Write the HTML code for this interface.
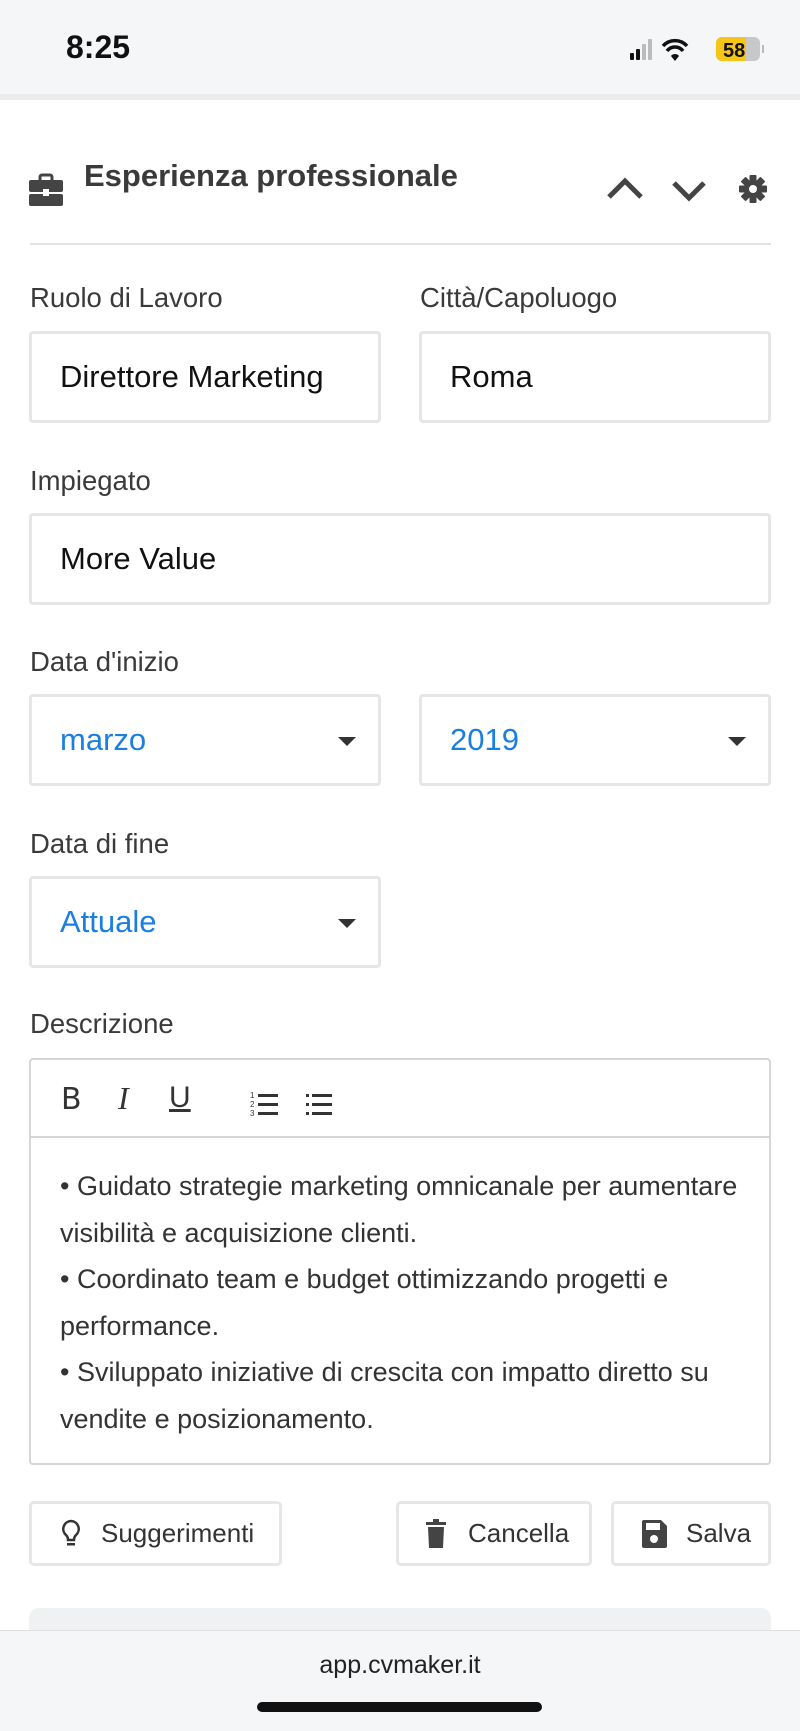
<!DOCTYPE html>
<html><head><meta charset="utf-8"><style>
*{box-sizing:border-box;margin:0;padding:0}
body{width:800px;height:1731px;overflow:hidden;background:#fff;font-family:"Liberation Sans",Arial,sans-serif;color:#333;position:relative}
.abs{position:absolute}
.status{left:0;top:0;width:800px;height:100px;background:#f5f6f8;border-bottom:6px solid #ebecee}
.label{font-size:27.5px;color:#3a3a3a}
.inp{border:3px solid #e6e6e6;border-radius:4px;background:#fff;font-size:31px;color:#111;padding-left:28px;display:flex;align-items:center}
.sel{color:#1a7fe0}
.caret{position:absolute;right:22px;top:50%;margin-top:-3px;border-left:9px solid transparent;border-right:9px solid transparent;border-top:9px solid #333}
.btn{border:3px solid #e6e6e6;border-radius:5px;display:flex;align-items:center;font-size:26px;color:#333}
.txt{font-size:27px;color:#333;line-height:46.6px}
</style></head><body>
<div class="abs status"></div>
<div class="abs" style="left:66px;top:29px;font-size:32px;font-weight:bold;color:#111">8:25</div>
<svg class="abs" style="left:630px;top:36px" width="140" height="26" viewBox="0 0 140 26">
<rect x="0" y="17" width="4" height="7" rx="1" fill="#111"/><rect x="6" y="13" width="4" height="11" rx="1" fill="#111"/><rect x="12" y="8" width="4" height="16" rx="1" fill="#bbb"/><rect x="18" y="3" width="4" height="21" rx="1" fill="#bbb"/>
<path d="M33 10 A16 16 0 0 1 57 10" stroke="#111" stroke-width="3.5" fill="none"/><path d="M37 15 A10 10 0 0 1 53 15" stroke="#111" stroke-width="3.5" fill="none"/><path d="M41 20 L45 25 L49 20 A5 5 0 0 0 41 20Z" fill="#111"/>
<rect x="86" y="1" width="44" height="24" rx="6" fill="#c8c8c8"/><path d="M92 1 h24 v24 h-24 a6 6 0 0 1 -6 -6 v-12 a6 6 0 0 1 6 -6z" fill="#f5c518"/><rect x="132" y="9" width="2" height="8" fill="#bbb"/>
<text x="93" y="21" font-family="Liberation Sans" font-weight="bold" font-size="20" fill="#111">58</text></svg>
<svg class="abs" style="left:28px;top:172px" width="36" height="36" viewBox="0 0 36 36"><path d="M12 8 v-3 a2 2 0 0 1 2 -2 h8 a2 2 0 0 1 2 2 v3" stroke="#444" stroke-width="3" fill="none"/><rect x="1" y="8" width="34" height="12" rx="2" fill="#444"/><rect x="1" y="22" width="34" height="12" rx="2" fill="#444"/><rect x="15" y="17" width="6" height="7" fill="#fff"/></svg>
<div class="abs" style="left:84px;top:158px;font-size:31px;font-weight:bold;color:#3a3a3a">Esperienza professionale</div>
<svg class="abs" style="left:605px;top:173px" width="170" height="32" viewBox="0 0 170 32"><path d="M4 24 L20 8 L36 24" stroke="#444" stroke-width="5" fill="none"/><path d="M69 10 L84 25 L99 10" stroke="#444" stroke-width="5" fill="none"/>
<g transform="translate(148,16)"><circle r="9" fill="#444"/><g fill="#444"><rect x="-3.5" y="-14" width="7" height="28" rx="1"/><rect x="-3.5" y="-14" width="7" height="28" rx="1" transform="rotate(45)"/><rect x="-3.5" y="-14" width="7" height="28" rx="1" transform="rotate(90)"/><rect x="-3.5" y="-14" width="7" height="28" rx="1" transform="rotate(135)"/></g><circle r="4" fill="#fff"/></g></svg>
<div class="abs" style="left:30px;top:243px;width:741px;height:2px;background:#e2e2e2"></div>
<div class="abs label" style="left:30px;top:282px">Ruolo di Lavoro</div>
<div class="abs label" style="left:420px;top:282px">Città/Capoluogo</div>
<div class="abs inp" style="left:29px;top:331px;width:352px;height:92px">Direttore Marketing</div>
<div class="abs inp" style="left:419px;top:331px;width:352px;height:92px">Roma</div>
<div class="abs label" style="left:30px;top:465px">Impiegato</div>
<div class="abs inp" style="left:29px;top:513px;width:742px;height:92px">More Value</div>
<div class="abs label" style="left:30px;top:646px">Data d'inizio</div>
<div class="abs inp sel" style="left:29px;top:694px;width:352px;height:92px">marzo<span class="caret"></span></div>
<div class="abs inp sel" style="left:419px;top:694px;width:352px;height:92px">2019<span class="caret"></span></div>
<div class="abs label" style="left:30px;top:828px">Data di fine</div>
<div class="abs inp sel" style="left:29px;top:876px;width:352px;height:92px">Attuale<span class="caret"></span></div>
<div class="abs label" style="left:30px;top:1008px">Descrizione</div>
<div class="abs" style="left:29px;top:1058px;width:742px;height:407px;border:2px solid #d6d6d6;border-radius:4px"></div>
<div class="abs" style="left:31px;top:1136px;width:738px;height:2px;background:#d6d6d6"></div>
<div class="abs" style="left:61px;top:1082px;font-size:30px;color:#333;font-family:'DejaVu Sans',sans-serif">B</div>
<div class="abs" style="left:118px;top:1080px;font-size:32px;color:#333;font-style:italic;font-family:'Liberation Serif',serif">I</div>
<div class="abs" style="left:169px;top:1081px;font-size:30px;color:#333;text-decoration:underline">U</div>
<svg class="abs" style="left:250px;top:1090px" width="85" height="30" viewBox="0 0 85 30"><text x="0" y="8" font-size="8" fill="#333" font-family="Liberation Sans">1</text><text x="0" y="17" font-size="8" fill="#333" font-family="Liberation Sans">2</text><text x="0" y="26" font-size="8" fill="#333" font-family="Liberation Sans">3</text><rect x="8" y="4" width="20" height="3" fill="#333"/><rect x="8" y="13" width="20" height="3" fill="#333"/><rect x="8" y="22" width="20" height="3" fill="#333"/>
<rect x="56" y="4" width="3" height="3" fill="#333"/><rect x="56" y="13" width="3" height="3" fill="#333"/><rect x="56" y="22" width="3" height="3" fill="#333"/><rect x="62" y="4" width="20" height="3" fill="#333"/><rect x="62" y="13" width="20" height="3" fill="#333"/><rect x="62" y="22" width="20" height="3" fill="#333"/></svg>
<div class="abs txt" style="left:60px;top:1163px;width:720px;white-space:nowrap">• Guidato strategie marketing omnicanale per aumentare<br>visibilità e acquisizione clienti.<br>• Coordinato team e budget ottimizzando progetti e<br>performance.<br>• Sviluppato iniziative di crescita con impatto diretto su<br>vendite e posizionamento.</div>
<div class="abs btn" style="left:29px;top:1501px;width:253px;height:65px;padding-left:28px"><svg width="22" height="32" viewBox="0 0 22 32" style="margin-right:19px"><path d="M11 3 a8 8 0 0 0 -5 14 c1 1 2 3 2 5 h6 c0 -2 1 -4 2 -5 a8 8 0 0 0 -5 -14z" stroke="#333" stroke-width="2.5" fill="none"/><rect x="7" y="25" width="8" height="2.5" fill="#333"/></svg>Suggerimenti</div>
<div class="abs btn" style="left:396px;top:1501px;width:196px;height:65px;padding-left:26px"><svg width="22" height="30" viewBox="0 0 22 30" style="margin-right:21px"><rect x="1" y="3" width="20" height="3" fill="#444"/><rect x="8" y="0" width="6" height="4" fill="#444"/><path d="M3 8 h16 l-1 21 h-14z" fill="#444"/></svg>Cancella</div>
<div class="abs btn" style="left:611px;top:1501px;width:160px;height:65px;padding-left:26px"><svg width="28" height="30" viewBox="0 0 28 30" style="margin-right:18px"><path d="M2 3 a2 2 0 0 1 2-2 h17 l6 6 v20 a2 2 0 0 1 -2 2 h-21 a2 2 0 0 1 -2 -2z" fill="#444"/><rect x="6" y="4" width="14" height="7" fill="#fff"/><circle cx="14" cy="20" r="4" fill="#fff"/></svg>Salva</div>
<div class="abs" style="left:29px;top:1608px;width:742px;height:40px;background:#f0f1f2;border-radius:10px"></div>
<div class="abs" style="left:0;top:1630px;width:800px;height:101px;background:#f5f6f8;border-top:1px solid #e0e0e0"></div>
<div class="abs" style="left:0;top:1651px;width:800px;text-align:center;font-size:25px;color:#222">app.cvmaker.it</div>
<div class="abs" style="left:257px;top:1702px;width:285px;height:10px;border-radius:5px;background:#111"></div>
</body></html>
